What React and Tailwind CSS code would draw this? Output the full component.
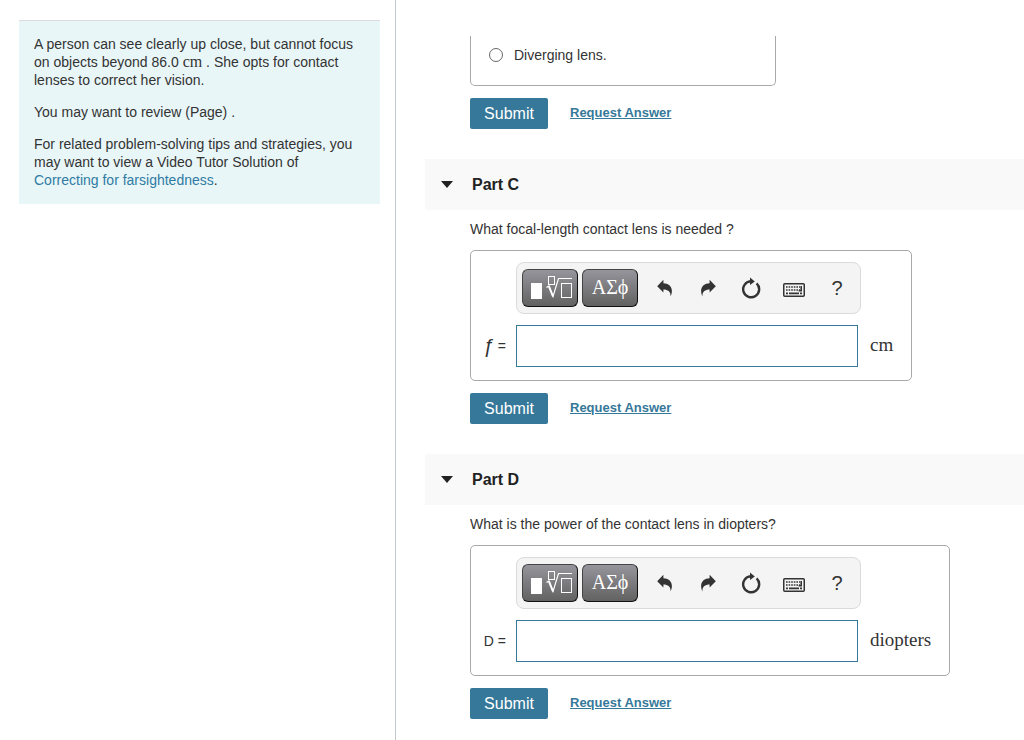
import { useState } from "react";

const serif = "font-['Liberation_Serif',serif]";

function TemplateIcon() {
  return (
    <svg width="46" height="28" viewBox="0 0 46 28" fill="none" aria-hidden="true">
      <rect x="4" y="9" width="11" height="16" fill="#fff" />
      <g stroke="#fff">
        <rect x="21.5" y="2.5" width="6" height="8" strokeWidth="1" />
        <path d="M19.5 13.5 L22 12 L26 22.5 L31.5 4.5 H45" strokeWidth="1.2" />
        <path d="M22 12.5 L26 22.5" strokeWidth="2" />
        <rect x="34.5" y="9.5" width="10" height="14" strokeWidth="1" />
      </g>
    </svg>
  );
}

function UndoIcon({ flip }) {
  return (
    <svg width="18" height="18" viewBox="0 0 18 18" fill="#333" aria-hidden="true" className={flip ? "-scale-x-100" : ""}>
      <path d="M1.2 7.2 L7.4 0.8 V4.2 C13.8 4.3 18.2 9.2 14.6 17.4 C14.8 12.6 12 10.6 7.4 10.5 V13.6 Z" />
    </svg>
  );
}

function ResetIcon() {
  return (
    <svg width="20" height="22" viewBox="0 0 20 22" fill="none" aria-hidden="true">
      <path d="M15.6 6.4 A8 8 0 1 1 9.6 4.3" stroke="#333" strokeWidth="2.4" />
      <path d="M9 0.6 L13.8 4.4 L9 8 Z" fill="#333" />
    </svg>
  );
}

function KeyboardIcon() {
  return (
    <svg width="22" height="14" viewBox="0 0 22 14" fill="none" aria-hidden="true">
      <rect x="0.75" y="0.75" width="20.5" height="12.5" rx="1" stroke="#333" strokeWidth="1.5" />
      <g stroke="#333" strokeWidth="1.6">
        <path d="M3 4 H17" strokeDasharray="1.6 1" />
        <path d="M3 7 H17" strokeDasharray="1.6 1" />
        <path d="M3 10.4 H5 M6 10.4 H16 M17 10.4 H19" />
        <path d="M18.2 3 V7.8 H15.6" />
      </g>
    </svg>
  );
}

const toolButton =
  "flex h-[38px] w-14 items-center justify-center rounded-md border border-[#444] border-r-[#111] border-b-[#111] bg-linear-to-b from-[#96959c] to-[#626262] text-white";
const iconButton = "flex h-8 w-8 items-center justify-center text-[#333]";

function Actions() {
  return (
    <div className="mt-3 flex items-center gap-[22px]">
      <button type="button" className="h-[31px] w-[78px] rounded-xs bg-[#367899] text-base text-white">
        Submit
      </button>
      <a href="#answer" className="pb-0.5 text-[13px] leading-4 font-bold text-[#367899] underline">
        Request Answer
      </a>
    </div>
  );
}

function Part({ id, title, question, symbol, unit }) {
  const [open, setOpen] = useState(true);
  return (
    <section className="mt-[30px]">
      <h2 className="bg-[#f9f9f9] text-base font-bold text-[#222]">
        <button type="button" aria-expanded={open} onClick={() => setOpen(!open)} className="flex h-[51px] w-full items-center gap-[19px] pl-4 text-left">
          <svg width="12" height="7" viewBox="0 0 12 7" aria-hidden="true">
            <path d="M0 0 H12 L6 7 Z" fill="#222" />
          </svg>
          {title}
        </button>
      </h2>
      {open && (
        <div className="pt-2.5 pl-[45px]">
          <label htmlFor={id} className="block leading-[18px]">{question}</label>
          <div className="mt-3 inline-block rounded-[5px] border border-[#a9a9a9] pt-[11px] pr-[18px] pb-[13px] align-top">
            <div className="ml-[45px] flex h-[52px] w-[345px] items-center rounded-lg border border-[#dadada] bg-[#f4f4f4] pl-[5px]">
              <button type="button" aria-label="Templates" className={toolButton}>
                <TemplateIcon />
              </button>
              <button type="button" aria-label="Symbols" className={`${toolButton} ml-1 pb-0.5 text-xl ${serif}`}>
                ΑΣϕ
              </button>
              <div className="ml-[11px] flex gap-[11px]">
                <button type="button" aria-label="Undo" className={iconButton}><UndoIcon /></button>
                <button type="button" aria-label="Redo" className={iconButton}><UndoIcon flip /></button>
                <button type="button" aria-label="Reset" className={iconButton}><ResetIcon /></button>
                <button type="button" aria-label="Keyboard shortcuts" className={`${iconButton} pt-1`}><KeyboardIcon /></button>
                <button type="button" aria-label="Help" className={`${iconButton} text-xl`}>?</button>
              </div>
            </div>
            <div className="mt-[11px] flex items-center">
              <span className="flex w-[45px] items-center justify-end gap-1 pr-2.5 whitespace-nowrap">
                {symbol}
                <span>=</span>
              </span>
              <input id={id} type="text" className="h-[42px] w-[342px] border border-[#367899] bg-white px-2 outline-none" />
              <span className={`ml-3 pb-0.5 text-[19px] leading-6 ${serif}`}>{unit}</span>
            </div>
          </div>
          <Actions />
        </div>
      )}
    </section>
  );
}

export default function App() {
  return (
    <div className="flex min-h-screen bg-white font-['Liberation_Sans',Arial,sans-serif] text-[14px] text-[#333]">
      <aside className="w-[396px] shrink-0 border-r border-[#c3c8d0] pt-5 pr-[15px] pl-[19px]">
        <div className="flex flex-col gap-3.5 border-t border-[#dcdcdc] bg-[#e9f6f8] pt-3.5 pr-5 pb-[15px] pl-[15px] leading-[18px]">
          <p>
            A person can see clearly up close, but cannot focus on objects beyond 86.0{" "}
            <span className={`text-base leading-4 ${serif}`}>cm</span> . She opts for contact lenses to correct her vision.
          </p>
          <p>You may want to review (Page) .</p>
          <p>
            For related problem-solving tips and strategies, you may want to view a Video Tutor Solution of{" "}
            <a href="#video" className="text-[#2f7ba3]">Correcting for farsightedness</a>.
          </p>
        </div>
      </aside>
      <main className="min-w-0 grow pt-9 pb-5 pl-[29px]">
        <div className="pl-[45px]">
          <div className="h-[50px] w-[306px] rounded-b-[5px] border border-t-0 border-[#a9a9a9] pt-2.5 pl-[18px]">
            <label className="flex items-center gap-[11px] leading-[18px]">
              <input type="radio" name="lens" className="h-[14px] w-[14px] appearance-none rounded-full border border-[#666] bg-white checked:border-4" />
              Diverging lens.
            </label>
          </div>
          <Actions />
        </div>
        <Part id="focal-length" title="Part C" question="What focal-length contact lens is needed ?" symbol={<i className="text-xl leading-5">ƒ</i>} unit="cm" />
        <Part id="power" title="Part D" question="What is the power of the contact lens in diopters?" symbol="D" unit="diopters" />
      </main>
    </div>
  );
}
